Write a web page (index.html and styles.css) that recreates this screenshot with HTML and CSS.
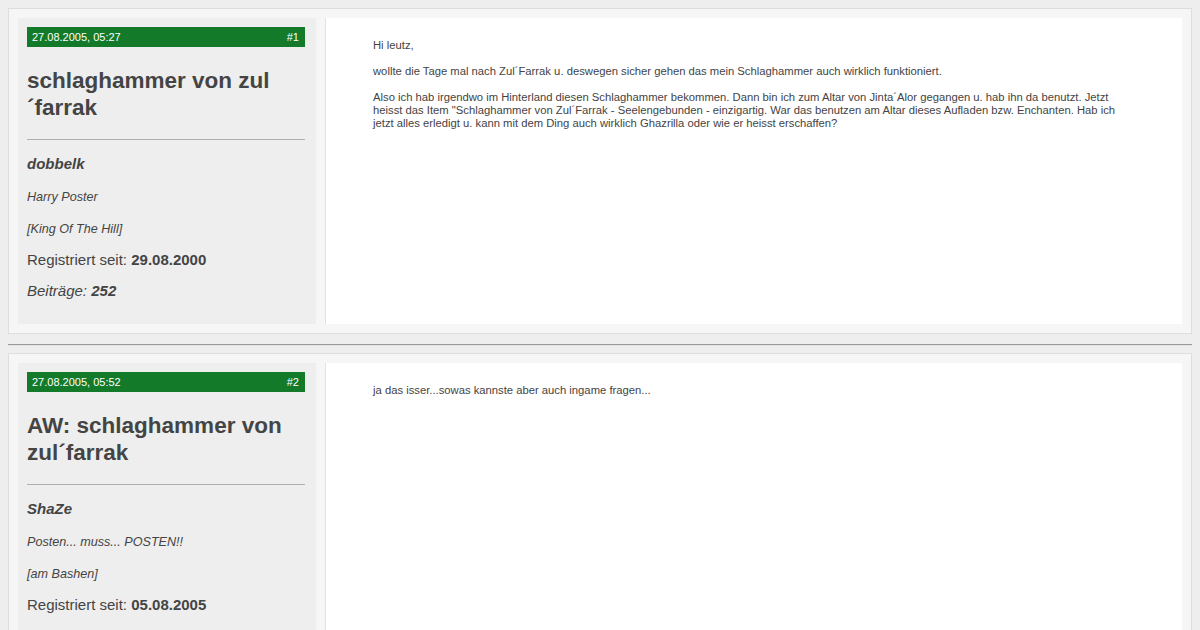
FILE: index.html
```html
<!DOCTYPE html>
<html lang="de">
<head>
    <meta charset="UTF-8">
    <meta name="viewport" content="width=device-width, initial-scale=1.0">
    <title>schlaghammer von zul´farrak</title>
    <link rel="stylesheet" href="styles.css">
</head>
<body>
    <div class="post">
        <div class="post-user">
            <div class="post-date">
                <span>27.08.2005, 05:27</span>
                <span>#1</span>
            </div>
            <h2 class="post-title">schlaghammer von zul´farrak</h2>
            <hr class="user-sep">
            <div class="user-name">dobbelk</div>
            <div class="user-title">Harry Poster</div>
            <div class="user-rank">[King Of The Hill]</div>
            <div class="user-reg">Registriert seit: <b>29.08.2000</b></div>
            <div class="user-posts">Beiträge: <b>252</b></div>
        </div>
        <div class="post-body">
            <p>Hi leutz,</p>
            <p>wollte die Tage mal nach Zul´Farrak u. deswegen sicher gehen das mein Schlaghammer auch wirklich funktioniert.</p>
            <p>Also ich hab irgendwo im Hinterland diesen Schlaghammer bekommen. Dann bin ich zum Altar von Jinta´Alor gegangen u. hab ihn da benutzt. Jetzt heisst das Item "Schlaghammer von Zul´Farrak - Seelengebunden - einzigartig. War das benutzen am Altar dieses Aufladen bzw. Enchanten. Hab ich jetzt alles erledigt u. kann mit dem Ding auch wirklich Ghazrilla oder wie er heisst erschaffen?</p>
        </div>
    </div>

    <hr class="post-sep">

    <div class="post">
        <div class="post-user">
            <div class="post-date">
                <span>27.08.2005, 05:52</span>
                <span>#2</span>
            </div>
            <h2 class="post-title">AW: schlaghammer von zul´farrak</h2>
            <hr class="user-sep">
            <div class="user-name">ShaZe</div>
            <div class="user-title">Posten... muss... POSTEN!!</div>
            <div class="user-rank">[am Bashen]</div>
            <div class="user-reg">Registriert seit: <b>05.08.2005</b></div>
            <div class="user-posts">Beiträge: <b>1.113</b></div>
        </div>
        <div class="post-body">
            <p>ja das isser...sowas kannste aber auch ingame fragen...</p>
        </div>
    </div>
</body>
</html>
```

FILE: styles.css
```css
body {
    font-family: 'Liberation Sans', Arial, sans-serif;
    background-color: #eeeeee;
    color: #444;
    margin: 8px;
}

.post {
    display: flex;
    background-color: #f6f6f6;
    border: 1px solid #dedede;
    padding: 9px;
}

.post-user {
    width: 278px;
    flex-shrink: 0;
    background-color: #eeeeee;
    padding: 9px 11px 24px 9px;
    margin-right: 9px;
}

.post-date {
    display: flex;
    justify-content: space-between;
    background-color: #137a2a;
    color: #fff;
    font-size: 11px;
    line-height: 20px;
    padding: 0 6px 0 5px;
}

.post-title {
    font-size: 22.5px;
    line-height: 27px;
    font-weight: bold;
    margin: 20px 0 0 0;
}

.user-sep {
    border: 0;
    border-top: 1px solid #b0b0b0;
    margin: 18px 0 0 0;
}

.user-name {
    font-size: 15px;
    font-weight: bold;
    font-style: italic;
    line-height: 18px;
    margin-top: 15px;
}

.user-title,
.user-rank {
    font-size: 12.6px;
    font-style: italic;
    line-height: 16px;
    margin-top: 16px;
}

.user-reg {
    font-size: 15px;
    line-height: 18px;
    margin-top: 14px;
}

.user-posts {
    font-size: 15px;
    font-style: italic;
    line-height: 18px;
    margin-top: 13px;
}

.post-body {
    flex: 1;
    background-color: #fff;
    border-left: 1px solid #e2e2e2;
    padding: 8px 46px 7px 47px;
    font-size: 11.25px;
    line-height: 13px;
}

.post-body p {
    margin: 13px 0;
}

.post-sep {
    border: 0;
    border-top: 1px solid #999;
    border-bottom: 1px solid #e4e4e4;
    margin: 10px 0 7px 0;
}
```
